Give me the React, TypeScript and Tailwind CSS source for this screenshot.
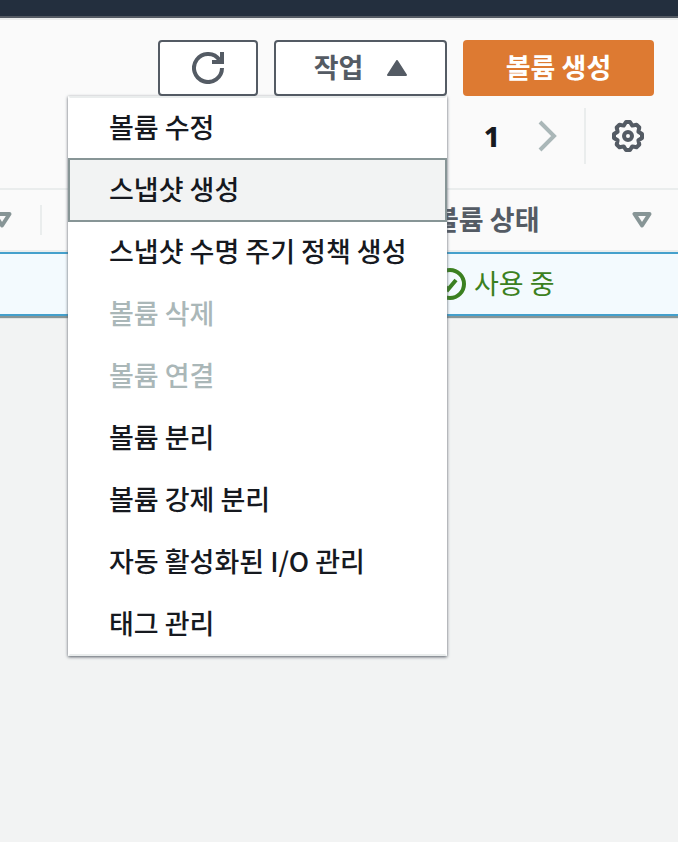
import React, { useState } from 'react';
import clsx from 'clsx';

interface MenuAction {
  label: string;
  disabled?: boolean;
}

const actions: MenuAction[] = [
  { label: '볼륨 수정' },
  { label: '스냅샷 생성' },
  { label: '스냅샷 수명 주기 정책 생성' },
  { label: '볼륨 삭제', disabled: true },
  { label: '볼륨 연결', disabled: true },
  { label: '볼륨 분리' },
  { label: '볼륨 강제 분리' },
  { label: '자동 활성화된 I/O 관리' },
  { label: '태그 관리' },
];

function RefreshIcon() {
  return (
    <svg viewBox="0 0 32 32" className="w-8 h-8" fill="none" stroke="currentColor" strokeWidth="4" aria-hidden="true">
      <path d="M30 16A14 14 0 1 1 27.500 8" />
      <path d="M30 0v10H20" />
    </svg>
  );
}

function SettingsIcon() {
  return (
    <svg viewBox="-16 -16 32 32" className="w-8 h-8" fill="none" stroke="currentColor" strokeWidth="4" strokeLinejoin="round" aria-hidden="true">
      <path d="M14-2V2L10.400 4.300 11.300 8.500 8.500 11.300 4.300 10.400 2 14H-2L-4.300 10.400-8.500 11.300-11.300 8.500-10.400 4.300-14 2V-2L-10.400-4.300-11.300-8.500-8.500-11.300-4.300-10.400-2-14H2L4.300-10.400 8.500-11.300 11.300-8.500 10.400-4.300Z" />
      <circle r="4" />
    </svg>
  );
}

function ChevronIcon() {
  return (
    <svg viewBox="0 0 20 32" className="w-5 h-8" fill="none" stroke="currentColor" strokeWidth="4" aria-hidden="true">
      <path d="M2 2l14 14L2 30" />
    </svg>
  );
}

function CaretUpIcon() {
  return (
    <svg viewBox="0 0 20 16" className="w-5 h-4" fill="currentColor" stroke="currentColor" strokeWidth="2" strokeLinejoin="round" aria-hidden="true">
      <path d="M10 1l9 14H1z" />
    </svg>
  );
}

function SortIcon() {
  return (
    <svg viewBox="0 0 20 16" className="w-5 h-4 text-[#879596]" fill="none" stroke="currentColor" strokeWidth="4" strokeLinejoin="round" aria-hidden="true">
      <path d="M2.500 2h15L10 13.500z" />
    </svg>
  );
}

function CheckIcon() {
  return (
    <svg viewBox="0 0 32 32" className="w-8 h-8" fill="none" stroke="currentColor" strokeWidth="4" aria-hidden="true">
      <circle cx="16" cy="16" r="14" />
      <path d="M8 15.500l6 6 8-9.500" />
    </svg>
  );
}

export default function App() {
  const [open, setOpen] = useState(true);
  const [active, setActive] = useState(1);

  return (
    <div className="min-h-screen bg-[#f2f3f3] text-[#16191f] text-[27px] leading-10 font-['Noto_Sans_CJK_KR',sans-serif] overflow-x-hidden">
      <header className="h-[18px] bg-[#232f3e] border-b-2 border-[#545b64]" />

      <main className="bg-[#fafafa] border-t-2 border-[#eaeded]">
        <div className="flex justify-end gap-4 pt-5 px-6">
          <button aria-label="새로 고침" className="w-[100px] h-14 flex items-center justify-center bg-white border-2 border-[#545b64] rounded text-[#545b64]">
            <RefreshIcon />
          </button>

          <div className="relative">
            <button
              aria-haspopup="menu"
              aria-expanded={open}
              onClick={() => setOpen(!open)}
              className="h-14 w-[173px] flex items-center justify-center gap-6 bg-white border-2 border-[#545b64] rounded text-[#545b64] font-bold"
            >
              <span className="pb-0.5">작업</span>
              <CaretUpIcon />
            </button>

            {open && (
              <ul role="menu" className="absolute top-full right-0 z-10 w-[379px] bg-white shadow-[0_1px_3px_#545b64]">
                {actions.map((action, idx) => (
                  <li key={action.label} role="none" className={clsx('relative', idx > 0 && '-mt-0.5', idx === active && 'z-10')}>
                    <button
                      role="menuitem"
                      disabled={action.disabled}
                      onMouseEnter={() => setActive(idx)}
                      className={clsx(
                        'w-full h-16 px-[39px] pb-0.5 flex items-center border-2 text-left font-medium whitespace-nowrap',
                        idx === active ? 'bg-[#f2f3f3] border-[#879596]' : 'border-transparent',
                        idx === 0 && idx !== active && 'border-t-[#eaeded]',
                        idx === actions.length - 1 && idx !== active && 'border-b-[#eaeded]',
                        action.disabled && 'text-[#aab7b8]'
                      )}
                    >
                      {action.label}
                    </button>
                  </li>
                ))}
              </ul>
            )}
          </div>

          <button className="h-14 w-[191px] pb-0.5 bg-[#dd7a32] rounded text-white font-bold">볼륨 생성</button>
        </div>

        <nav aria-label="페이지" className="flex justify-end items-center mt-3 mb-6 pr-[34px]">
          <button aria-current="page" className="px-[38px] font-['Noto_Sans',sans-serif] text-[28px] font-extrabold">1</button>
          <button aria-label="다음 페이지" className="pr-[26px] text-[#aab7b8]">
            <ChevronIcon />
          </button>
          <button aria-label="설정" className="h-14 pl-[26px] border-l-2 border-[#eaeded] text-[#545b64]">
            <SettingsIcon />
          </button>
        </nav>

        <table className="w-full table-fixed border-separate border-spacing-0 shadow-[0_2px_1px_#879596]">
          <thead>
            <tr>
              <th scope="col" aria-label="정렬" className="w-[42px] h-16 p-0 border-y-2 border-[#eaeded]">
                <div className="h-[30px] flex items-center justify-end border-r-2 border-[#eaeded] pr-7">
                  <div className="shrink-0">
                    <SortIcon />
                  </div>
                </div>
              </th>
              <th scope="col" aria-label="연결" className="p-0 border-y-2 border-[#eaeded]" />
              <th scope="col" className="w-[244px] p-0 pr-[26px] border-y-2 border-[#eaeded] text-left text-[#545b64] font-bold">
                <div className="flex items-center justify-between">
                  <span className="pb-0.5">볼륨 상태</span>
                  <SortIcon />
                </div>
              </th>
            </tr>
          </thead>
          <tbody>
            <tr className="bg-[#f3fafe]">
              <td className="h-16 p-0 border-y-2 border-[#44a0cc]" />
              <td className="p-0 border-y-2 border-[#44a0cc]" />
              <td className="p-0 border-y-2 border-[#44a0cc] text-[#3b8020]">
                <div className="flex items-center gap-2">
                  <CheckIcon />
                  <span className="pb-0.5">사용 중</span>
                </div>
              </td>
            </tr>
          </tbody>
        </table>
      </main>
    </div>
  );
}
